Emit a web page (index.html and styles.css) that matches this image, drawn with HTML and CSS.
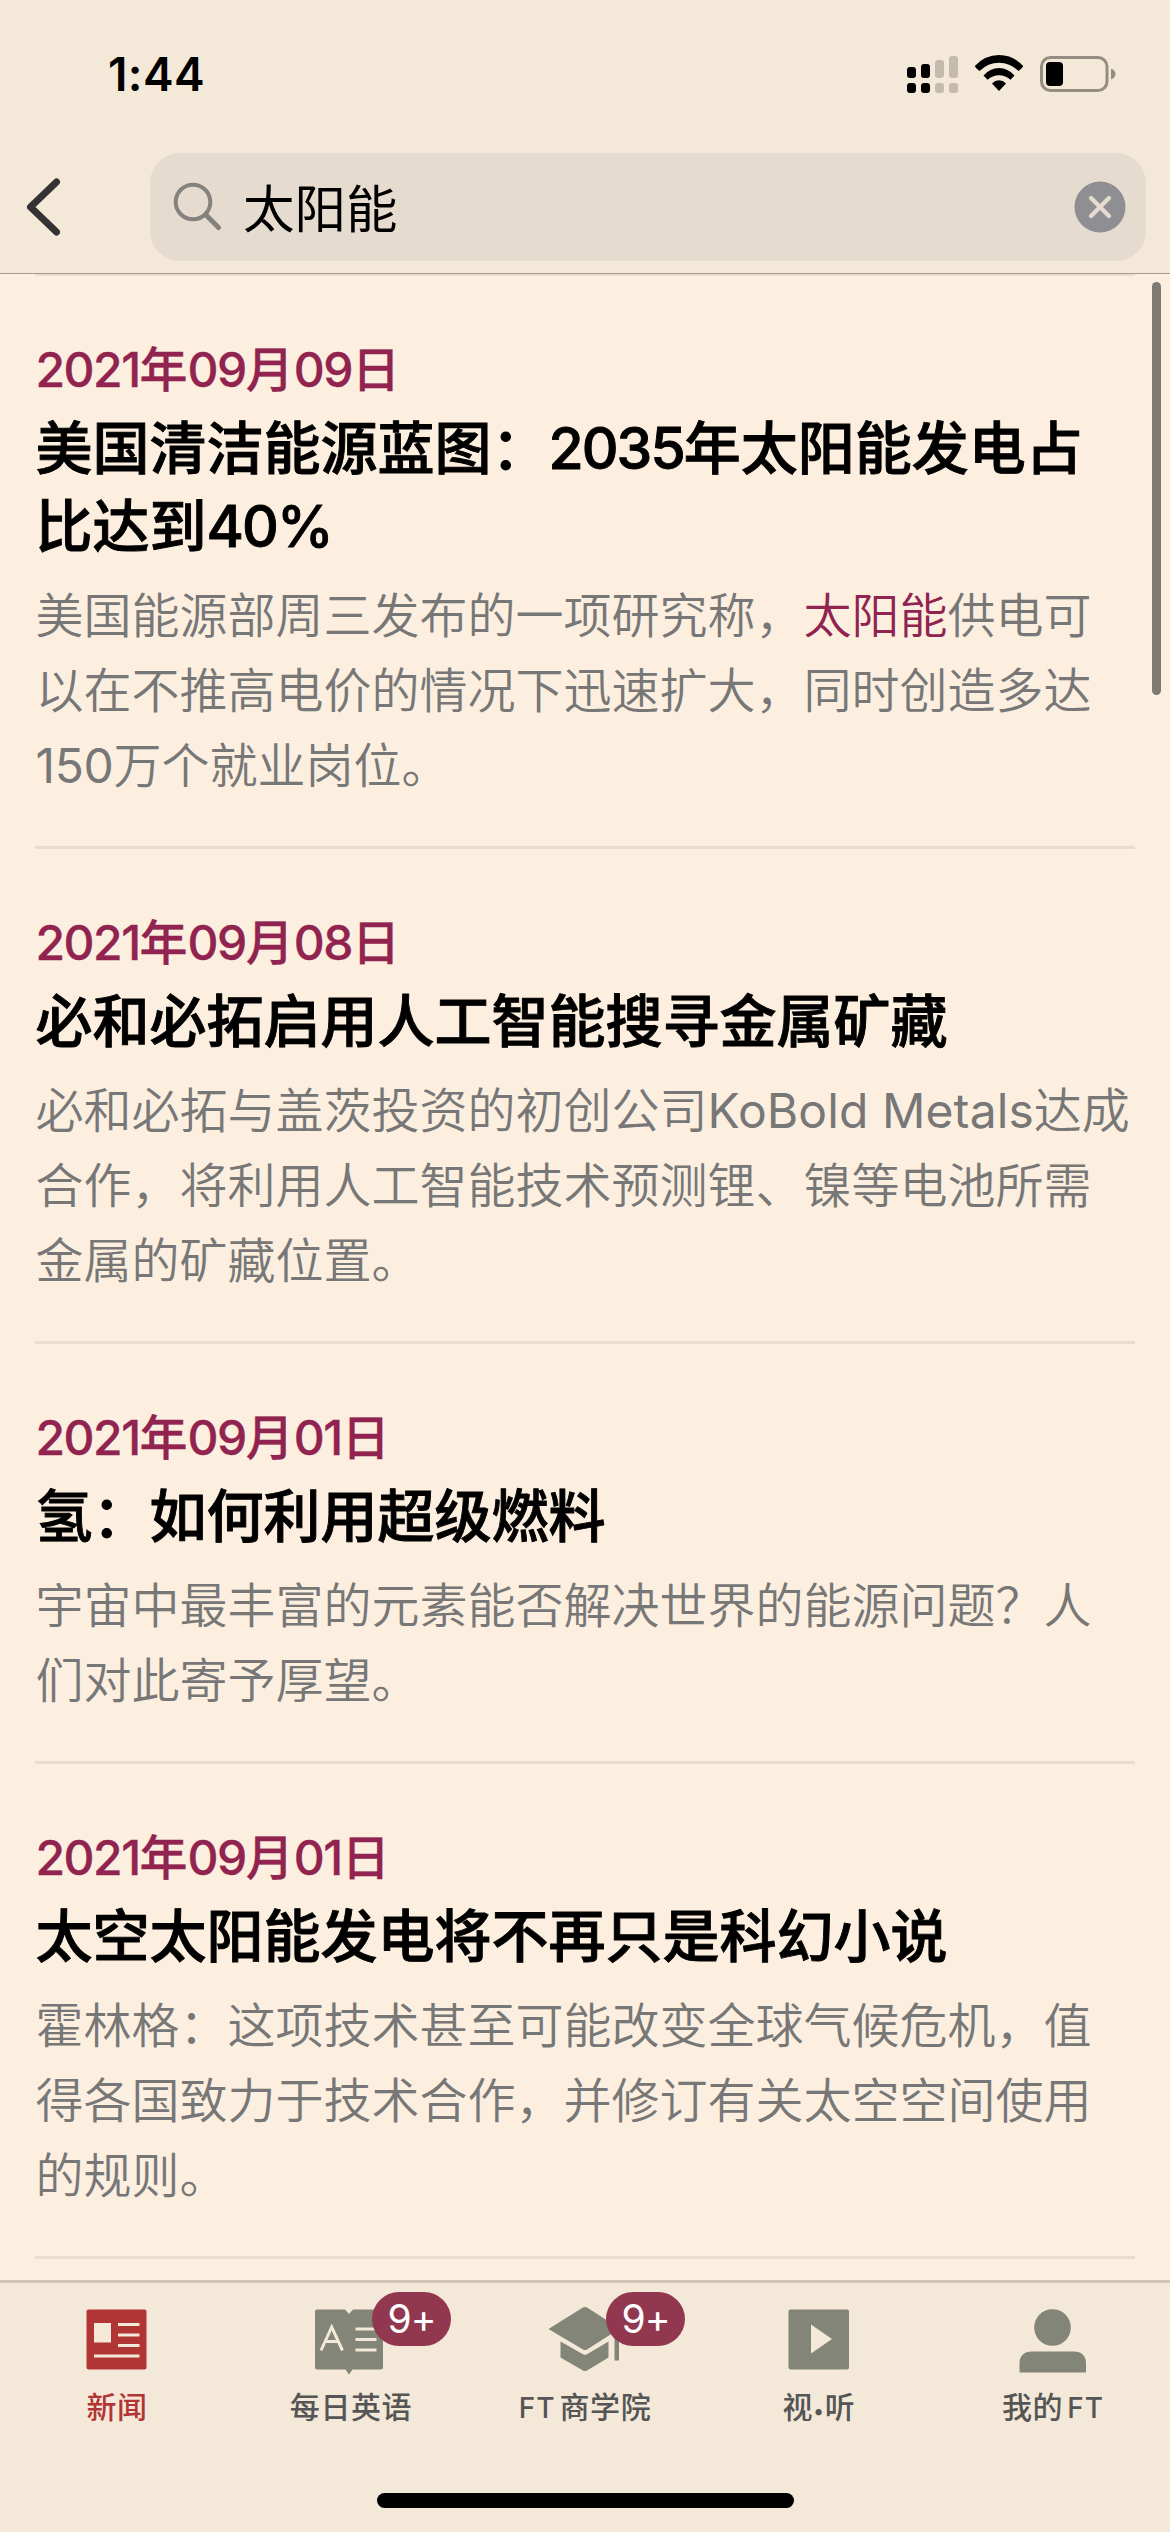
FILE: index.html
```html
<!DOCTYPE html>
<html lang="zh-CN">
<head>
<meta charset="utf-8">
<title>太阳能</title>
<link rel="stylesheet" href="styles.css">
</head>
<body>
<div class="screen">
  <header class="header">
    <div class="status">
      <span class="clock">1:44</span>
      <svg class="status-icons" width="214" height="44" viewBox="904 52 214 44">
        <g>
          <rect x="907" y="67" width="9" height="11" rx="3"/>
          <rect x="921" y="64" width="9" height="14" rx="3"/>
          <rect x="907" y="83" width="9" height="10" rx="3"/>
          <rect x="921" y="83" width="9" height="10" rx="3"/>
        </g>
        <g fill="#c5bbad">
          <rect x="935" y="60" width="9" height="18" rx="3"/>
          <rect x="949" y="56" width="9" height="22" rx="3"/>
          <rect x="935" y="83" width="9" height="10" rx="3"/>
          <rect x="949" y="83" width="9" height="10" rx="3"/>
        </g>
        <path d="M979.5 71Q975.5 68 974.8 66Q985 55 999 55Q1013 55 1023.2 66Q1022.500 68 1018.500 71Q1010 62.700 999 62.700Q988 62.700 979.500 71Z"/>
        <path d="M987.500 79.700L983.500 75.500Q990 68 999 68Q1008 68 1014.500 75.500L1010.500 79.700Q1005.500 75.200 999 75.200Q992.500 75.200 987.500 79.700Z"/>
        <path d="M999 91L992 83.500Q995 80.300 999 80.300Q1003 80.300 1006 83.500Z"/>
        <rect x="1041.500" y="57.500" width="65.500" height="33" rx="9" fill="none" stroke="#968d82" stroke-width="3"/>
        <rect x="1046" y="62" width="17" height="24" rx="4"/>
        <path d="M1111 68.500Q1115.500 70.500 1115.500 74Q1115.500 77.500 1111 79.500Z" fill="#968d82"/>
      </svg>
    </div>
    <div class="navbar">
      <svg class="back" width="40" height="64" viewBox="24 175 40 64">
        <path d="M56.500 182L30.500 207L56.500 232" fill="none" stroke="#333" stroke-width="7" stroke-linecap="round" stroke-linejoin="round"/>
      </svg>
      <div class="search">
        <svg width="52" height="52" viewBox="171 181 52 52" fill="none" stroke="#85817d" stroke-linecap="round">
          <circle cx="193" cy="202" r="17.300" stroke-width="4"/>
          <path d="M206 215L218.500 227.500" stroke-width="5"/>
        </svg>
        <span class="query">太阳能</span>
        <svg width="52" height="52" viewBox="0 0 52 52">
          <circle cx="26" cy="26" r="25.500" fill="#8e8e93"/>
          <path d="M17 17L35 35M35 17L17 35" stroke="#e5dbcf" stroke-width="4.300" stroke-linecap="round"/>
        </svg>
      </div>
    </div>
  </header>

  <main class="results">
    <article class="item">
      <time class="date"><span>2021</span>年<span>09</span>月<span>09</span>日</time>
      <h2 class="title">美国清洁能源蓝图：<span>2035</span>年太阳能发电占<br>比达到<span>40%</span></h2>
      <p class="summary">美国能源部周三发布的一项研究称，<em>太阳能</em>供电可<br>以在不推高电价的情况下迅速扩大，同时创造多达<br><span class="number">150</span>万个就业岗位。</p>
    </article>
    <article class="item">
      <time class="date"><span>2021</span>年<span>09</span>月<span>08</span>日</time>
      <h2 class="title">必和必拓启用人工智能搜寻金属矿藏</h2>
      <p class="summary">必和必拓与盖茨投资的初创公司<span class="latin">KoBold Metals</span>达成<br>合作，将利用人工智能技术预测锂、镍等电池所需<br>金属的矿藏位置。</p>
    </article>
    <article class="item">
      <time class="date"><span>2021</span>年<span>09</span>月<span>01</span>日</time>
      <h2 class="title">氢：如何利用超级燃料</h2>
      <p class="summary">宇宙中最丰富的元素能否解决世界的能源问题？人<br>们对此寄予厚望。</p>
    </article>
    <article class="item">
      <time class="date"><span>2021</span>年<span>09</span>月<span>01</span>日</time>
      <h2 class="title">太空太阳能发电将不再只是科幻小说</h2>
      <p class="summary">霍林格：这项技术甚至可能改变全球气候危机，值<br>得各国致力于技术合作，并修订有关太空空间使用<br>的规则。</p>
    </article>
    <div class="scrollbar"></div>
  </main>

  <footer class="footer">
    <nav class="tabs">
      <a class="tab active">
        <svg width="80" height="70" viewBox="77 2306 80 70">
          <rect x="86.500" y="2309.500" width="60" height="60" rx="2" fill="#b13534"/>
          <path d="M94 2323h17v19.500h-17zM118 2323h21.500v3h-21.500zM118 2333.500h21.500v3h-21.500zM118 2344h21.500v3h-21.500zM94 2354.500h45.500v3h-45.500z" fill="#f4e8d8"/>
        </svg>
        <span>新闻</span>
      </a>
      <a class="tab">
        <svg width="80" height="70" viewBox="311 2306 80 70">
          <path d="M317 2309.500H345L349 2314L353 2309.500H381Q383 2309.500 383 2311.500V2367.500Q383 2369.500 381 2369.500H352.500L349 2374.500L345.500 2369.500H317Q315 2369.500 315 2367.500V2311.500Q315 2309.500 317 2309.500Z" fill="#828577"/>
          <path d="M321 2350.500L331.700 2327L342.500 2350.500M325 2341.500H338.500M355.500 2329H376.500M355.500 2339.500H376.500M355.500 2350H376.500" fill="none" stroke="#f4e8d8" stroke-width="3"/>
        </svg>
        <span>每日英语</span>
        <b class="badge">9+</b>
      </a>
      <a class="tab">
        <svg width="80" height="70" viewBox="545 2306 80 70" fill="#828577">
          <path d="M548.500 2329L583 2307.500Q585 2306.300 587 2307.500L619 2328V2360.500H614.500V2332L587 2349.500Q585 2350.700 583 2349.500Z"/>
          <path d="M560.500 2341.500L583 2354.300Q585 2355.300 587 2354.300L608.500 2341.500V2357.500L587 2370.500Q585 2371.500 583 2370.500L560.500 2357.500Z"/>
        </svg>
        <span><i>FT</i>商学院</span>
        <b class="badge">9+</b>
      </a>
      <a class="tab">
        <svg width="80" height="70" viewBox="779 2306 80 70">
          <rect x="788.500" y="2309.500" width="60.500" height="60" rx="2" fill="#828577"/>
          <path d="M811 2324.500L832 2339L811 2353.500Z" fill="#f4e8d8"/>
        </svg>
        <span>视<i class="dot">•</i>听</span>
      </a>
      <a class="tab">
        <svg width="80" height="70" viewBox="1013 2306 80 70" fill="#828577">
          <circle cx="1052.500" cy="2327.500" r="18.300"/>
          <path d="M1019.500 2372.500V2364Q1019.500 2351.500 1032 2351.500H1073.500Q1086 2351.500 1086 2364V2372.500Z"/>
        </svg>
        <span>我的<i class="after">FT</i></span>
      </a>
    </nav>
    <div class="home-bar"></div>
  </footer>
</div>
</body>
</html>
```
FILE: styles.css
```css
* { box-sizing: border-box; margin: 0; padding: 0; }
body {
  font-family: Inter, "Noto Sans CJK SC", sans-serif;
  background: #fcefdf;
  color: #000;
}
svg { display: block; flex: none; }
.screen {
  width: 1170px;
  height: 2532px;
  display: flex;
  flex-direction: column;
  overflow: hidden;
}
.header {
  height: 274px;
  flex: none;
  background: #f4e8d8;
  border-bottom: 1px solid #a59c90;
  position: relative;
  z-index: 1;
}
.status {
  height: 153px;
  padding: 52px 52px 0 108px;
  display: flex;
  align-items: flex-start;
  justify-content: space-between;
}
.clock {
  font-size: 46px;
  font-weight: 600;
  line-height: 44px;
  letter-spacing: 0.4px;
}
.navbar {
  height: 108px;
  padding: 0 24px;
  display: flex;
  align-items: center;
  gap: 86px;
}
.search {
  flex: 1;
  height: 108px;
  padding: 0 20px 0 21px;
  display: flex;
  align-items: center;
  gap: 20px;
  border-radius: 30px;
  background: #e5dbcf;
}
.query {
  flex: 1;
  padding-top: 3px;
  font-size: 51.5px;
  line-height: 60px;
}
.results {
  flex: 1;
  min-height: 0;
  margin-top: -1px;
  padding: 0 35px;
  position: relative;
}
.item {
  border-top: 3px solid #e8decf;
  padding: 56px 0 43px 0.5px;
  white-space: nowrap;
}
.item:last-of-type { border-bottom: 3px solid #e8decf; }
.date {
  display: block;
  font-size: 48px;
  font-weight: 500;
  line-height: 75px;
  color: #90234f;
  -webkit-text-stroke: 0.3px #90234f;
}
.date span { letter-spacing: -1.5px; }
.title {
  margin: 3px 0 12px;
  font-size: 57px;
  font-weight: 500;
  line-height: 78px;
  -webkit-text-stroke: 0.9px #000;
}
.title span { letter-spacing: -1.9px; }
.summary {
  font-size: 48px;
  line-height: 75px;
  font-weight: 350;
  color: #777;
}
.summary em { font-style: normal; color: #90234f; }
.latin { font-weight: 380; letter-spacing: 0.1px; }
.number { font-weight: 380; letter-spacing: -0.3px; }
.scrollbar {
  position: absolute;
  top: 9px;
  right: 9px;
  width: 9px;
  height: 413px;
  border-radius: 5px;
  background: #7e7a71;
}
.footer {
  height: 252px;
  flex: none;
  background: #f4e8d8;
  border-top: 3px solid #cfc6b9;
  display: flex;
  flex-direction: column;
  align-items: center;
}
.tabs {
  width: 100%;
  height: 210px;
  display: grid;
  grid-template-columns: repeat(5, 1fr);
}
.tab {
  position: relative;
  padding-top: 23px;
  display: flex;
  flex-direction: column;
  align-items: center;
  gap: 11px;
  font-size: 30px;
  font-weight: 450;
  line-height: 40px;
  letter-spacing: 0.6px;
  color: #555;
}
.active { color: #b13534; }
.tab i { font-style: normal; font-size: 28px; letter-spacing: 1px; margin-right: 4px; }
.tab .after { margin: 0 0 0 4px; }
.tab .dot { margin: 0; font-size: 20px; }
.badge {
  position: absolute;
  left: 138px;
  top: 9px;
  width: 79px;
  height: 54px;
  border-radius: 27px;
  background: #91374f;
  color: #fff;
  font-size: 39px;
  font-weight: 400;
  line-height: 54px;
  letter-spacing: -1px;
  text-align: center;
}
.home-bar {
  width: 417px;
  height: 15px;
  border-radius: 8px;
  background: #000;
}
```
